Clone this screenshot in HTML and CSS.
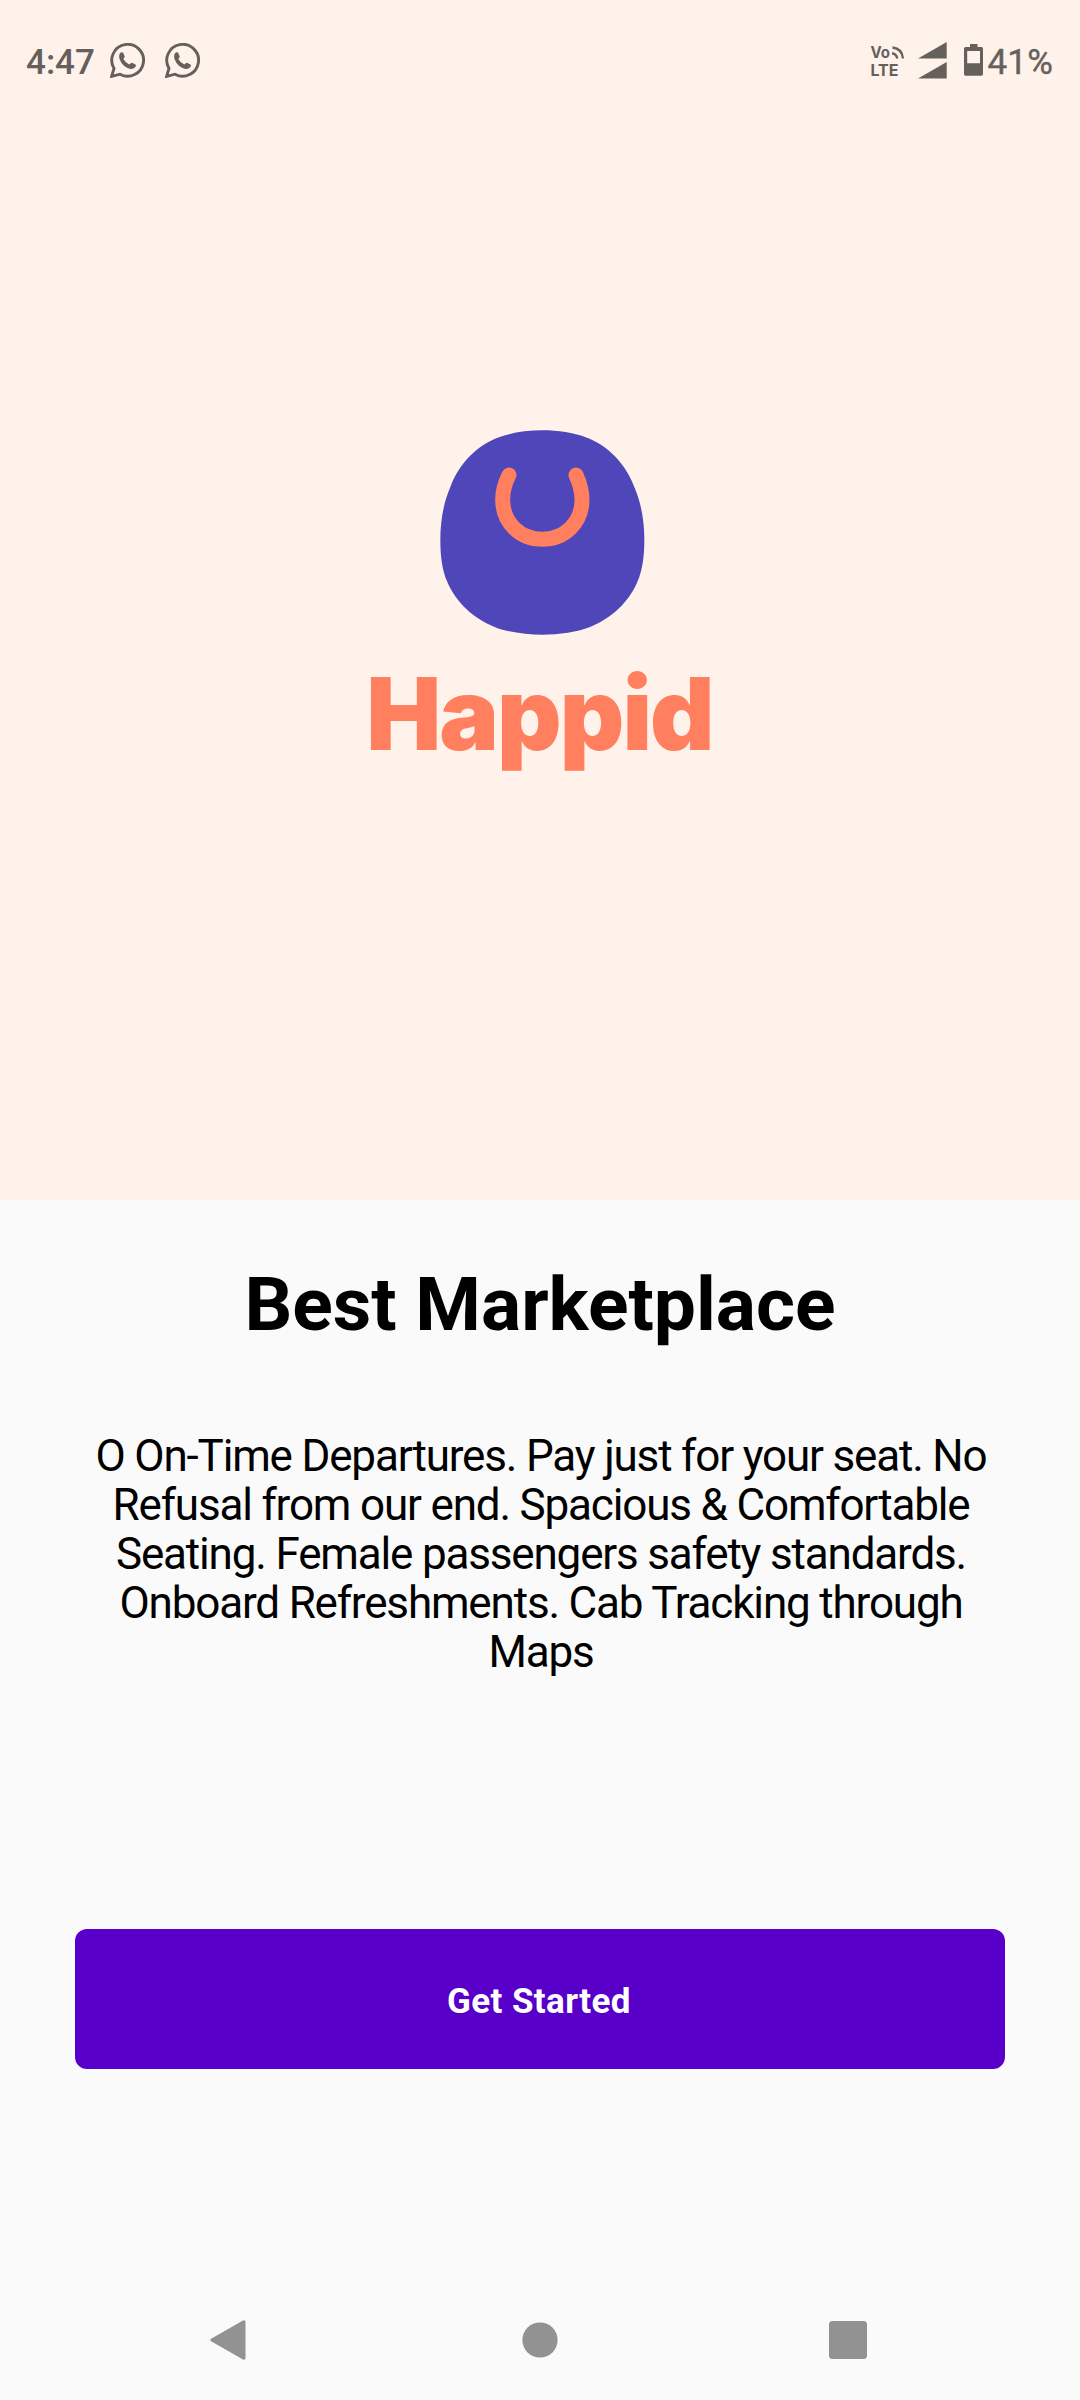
FILE: index.html
```html
<!DOCTYPE html>
<html lang="en">
<head>
<meta charset="utf-8">
<title>Happid</title>
<link rel="stylesheet" href="styles.css">
</head>
<body>
<div class="screen">
  <section class="hero">
    <header class="status">
      <div class="status-left">
        <span class="clock">4:47</span>
        <svg class="chat" viewBox="0 0 35 35"><path d="M1.6 33.4 4 25.4A15.9 15.9 0 1 1 10 31.2Z" fill="none" stroke="currentColor" stroke-width="2.9"/><path d="M9.2 12.2C9.6 10 11 9 12.300 9.300Q13.200 9.500 13.500 10.400L14.700 13.500Q14.900 14.300 13.300 16.100Q15.500 20 19.300 21.600Q21.200 19.500 22 19.700L25.500 21.400Q26.400 22 25.700 23.600Q24.300 26.400 20.500 26Q12.500 24 9.600 16.300Q8.900 14.300 9.200 12.200Z" fill="currentColor"/></svg>
        <svg class="chat" viewBox="0 0 35 35"><path d="M1.6 33.4 4 25.4A15.9 15.9 0 1 1 10 31.2Z" fill="none" stroke="currentColor" stroke-width="2.9"/><path d="M9.2 12.2C9.6 10 11 9 12.300 9.300Q13.200 9.500 13.500 10.400L14.700 13.500Q14.900 14.300 13.300 16.100Q15.500 20 19.300 21.600Q21.200 19.500 22 19.700L25.500 21.400Q26.400 22 25.700 23.600Q24.300 26.400 20.500 26Q12.500 24 9.600 16.300Q8.900 14.300 9.200 12.200Z" fill="currentColor"/></svg>
      </div>
      <div class="status-right">
        <svg class="volte" viewBox="0 0 36 32"><text x="0.500" y="13" textLength="19.500" lengthAdjust="spacingAndGlyphs">Vo</text><text x="0.500" y="30.600" textLength="28" lengthAdjust="spacingAndGlyphs">LTE</text><path d="M22 8.200Q26.500 8.800 27.200 13.500M22.500 2.500Q32 3.500 33 13.500" fill="none" stroke="currentColor" stroke-width="2.400"/></svg>
        <svg class="signal" viewBox="0 0 29 37"><path d="M0 16.500 28.700 0V16.500ZM0 36.500 28.700 20V36.500Z" fill="currentColor"/></svg>
        <svg class="battery" viewBox="0 0 19 32"><path fill="currentColor" fill-rule="evenodd" d="M6 0H13.500V3H17.500Q19 3 19 4.500V30Q19 31.700 17.500 31.700H1.500Q0 31.700 0 30V4.500Q0 3 1.500 3H6ZM3.200 7V19.300H16V7Z"/></svg>
        <span class="percent">41%</span>
      </div>
    </header>
    <div class="brand">
      <svg class="mark" viewBox="271 59 615 615"><path fill="#4f46ba" d="M578 60C626 60 671 67 708 81C774 105 828 160 853 228C874 275 884 330 884 388C884 440 878 480 863 515C838 575 784 625 723 649C686 665 626 673 578 673C530 673 470 665 433 649C372 625 318 575 293 515C278 480 272 440 272 388C272 330 282 275 303 228C328 160 382 105 448 81C485 67 530 60 578 60Z"/><path fill="none" stroke="#ff7f5e" stroke-width="45" stroke-linecap="round" d="M478 194C465 220 459 243 459 268C459 337 511 386.500 578 386.500C645 386.500 697 337 697 268C697 243 691 220 679 194"/></svg>
      <div class="wordmark">Happid</div>
    </div>
  </section>
  <main class="content">
    <h1 class="title">Best Marketplace</h1>
    <p class="text">O On-Time Departures. Pay just for your seat. No Refusal from our end. Spacious &amp; Comfortable Seating. Female passengers safety standards. Onboard Refreshments. Cab Tracking through Maps</p>
    <button class="start">Get Started</button>
  </main>
  <nav class="nav">
    <svg viewBox="0 0 40 42"><path d="M35.500 3V39Q35.500 41.500 33 40.500L1.500 22.500Q-1 21 1.500 19.500L33 1.500Q35.500 .500 35.500 3Z" fill="currentColor"/></svg>
    <svg viewBox="0 0 40 42"><circle cx="21" cy="21" r="17.600" fill="currentColor"/></svg>
    <svg viewBox="0 0 40 42"><rect x="1" y="2" width="38" height="38" rx="3.500" fill="currentColor"/></svg>
  </nav>
</div>
</body>
</html>
```
FILE: styles.css
```css
body {
  margin: 0;
  font-family: Roboto, sans-serif;
}
.screen {
  width: 1080px;
  height: 2400px;
  display: flex;
  flex-direction: column;
  background: #fafafa;
}
.hero {
  height: 1200px;
  background: #fff2ea;
}
.status {
  height: 120px;
  box-sizing: border-box;
  padding: 0 27px 0 26px;
  display: flex;
  justify-content: space-between;
  align-items: center;
  color: #66605d;
  font-size: 35px;
  font-weight: 500;
  line-height: 41px;
}
.status-left,
.status-right {
  display: flex;
  align-items: center;
}
.clock {
  width: 84px;
  padding-top: 4px;
  white-space: nowrap;
}
.chat {
  width: 35px;
  height: 35px;
  margin-right: 20px;
}
.volte {
  width: 36px;
  height: 32px;
  margin: 1px 12px 0 0;
  overflow: visible;
  font: 700 16px Inter, sans-serif;
  fill: currentColor;
}
.signal {
  width: 29px;
  height: 37px;
  margin-right: 17px;
}
.battery {
  width: 19px;
  height: 32px;
  margin-right: 4px;
}
.percent {
  padding-top: 4px;
  font-weight: 400;
  -webkit-text-stroke: 0.4px currentColor;
  letter-spacing: 0.2px;
  white-space: nowrap;
}
.brand {
  padding-top: 310px;
  display: flex;
  flex-direction: column;
  align-items: center;
}
.mark {
  width: 205px;
  height: 205px;
  margin-left: 5px;
}
.wordmark {
  margin: 18px 1px 0 0;
  color: #ff7f5e;
  font: 900 100px/121px Inter, sans-serif;
  letter-spacing: -1.9px;
}
.content {
  flex: 1;
  display: flex;
  flex-direction: column;
  align-items: center;
}
.title {
  margin: 60px 0 0;
  color: #000;
  font-size: 75px;
  font-weight: 700;
  line-height: 88px;
}
.text {
  width: 930px;
  margin: 84px 0 0 2px;
  color: #000;
  font-size: 44px;
  font-weight: 400;
  line-height: 49px;
  letter-spacing: -1.17px;
  text-align: center;
}
.start {
  width: 930px;
  height: 140px;
  margin-top: 252px;
  padding: 4px 2px 0 0;
  border: 0;
  border-radius: 12px;
  background: #5800ca;
  color: #fff;
  font: 700 35px Roboto, sans-serif;
  letter-spacing: 0.4px;
}
.nav {
  height: 120px;
  box-sizing: border-box;
  padding: 0 212px 0 209.500px;
  display: flex;
  justify-content: space-between;
  align-items: center;
  color: #929292;
}
.nav svg {
  width: 40px;
  height: 42px;
}
```
